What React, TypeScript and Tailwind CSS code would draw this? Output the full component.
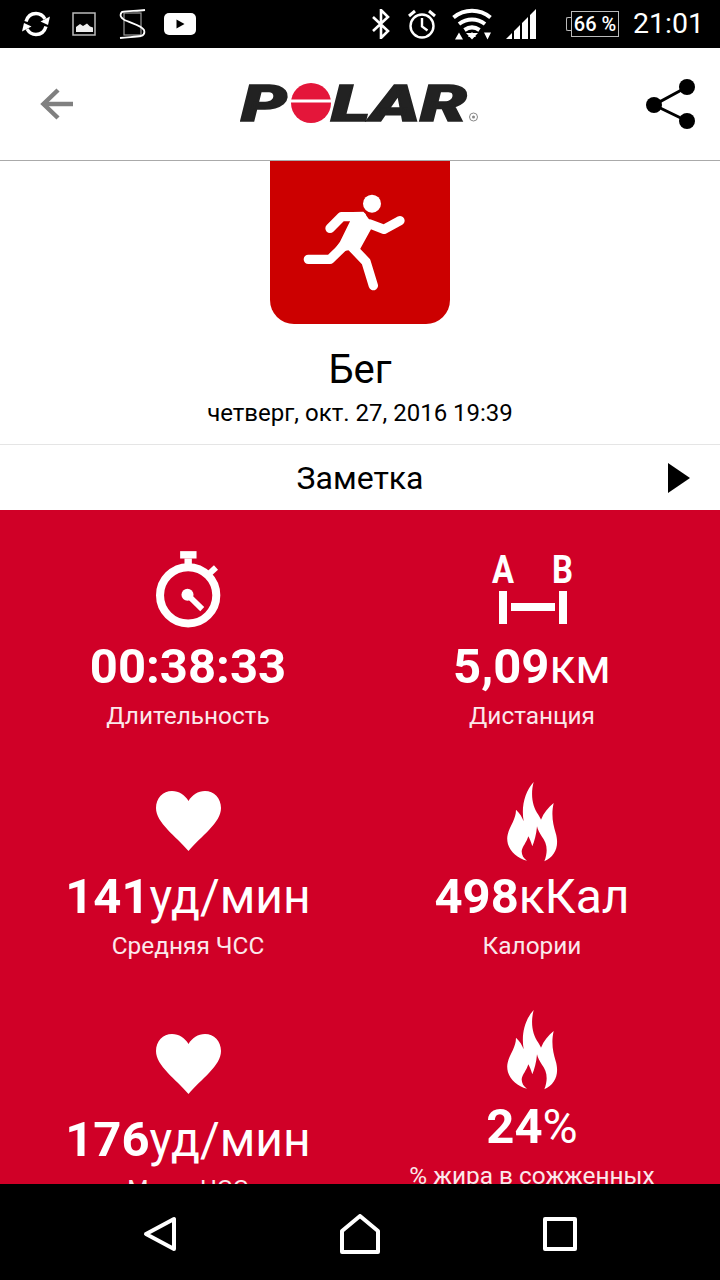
const FONT = "font-['Roboto',sans-serif]";

function SyncIcon() {
  return (
    <svg width="30" height="28" viewBox="0 0 30 28" fill="none" stroke="#fff" strokeWidth="3.4">
      <path d="M5 11.5C6.5 6.5 10 3.5 15 3.5c4 0 7 2 9 5.5" />
      <path d="M25 16.5C23.5 21.5 20 24.5 15 24.5c-4 0-7-2-9-5.5" />
      <path d="M29 6.5l-2 8.5-7.5-3.5z" fill="#fff" stroke="none" />
      <path d="M1 21.500l2-8.500 7.500 3.500z" fill="#fff" stroke="none" />
    </svg>
  );
}

function ImageIcon() {
  return (
    <svg width="24" height="24" viewBox="0 0 24 24" className="ml-[21px]">
      <rect x="1" y="1" width="22" height="22" fill="none" stroke="#bbb" strokeWidth="1.5" />
      <path d="M4 20v-5l4-3 3 2 4-2.500 3 3 3 1v4.500z" fill="#eee" />
    </svg>
  );
}

function ScrollIcon() {
  return (
    <svg width="27" height="30" viewBox="0 0 27 30" fill="none" className="ml-[23px]">
      <rect x="5" y="4" width="17" height="22" stroke="#999" strokeWidth="1.200" />
      <path d="M26 1C18 2 9 2 3 3 0 6 2 10 8 12c7 3 15 5 17 9 1 3 0 5-3 6-6 1-13 1-21 2" stroke="#fff" strokeWidth="1.800" />
    </svg>
  );
}

function YoutubeIcon() {
  return (
    <svg width="32" height="22" viewBox="0 0 32 22" className="ml-[18px]">
      <rect width="32" height="22" rx="5" fill="#fff" />
      <path d="M12.500 6.500l8 4.500-8 4.500z" fill="#000" />
    </svg>
  );
}

function BluetoothIcon() {
  return (
    <svg width="18" height="30" viewBox="0 0 18 30" fill="none" stroke="#fff" strokeWidth="2.600" className="ml-auto">
      <path d="M1 8l15 14-7 7V1l7 7L1 22" />
    </svg>
  );
}

function AlarmIcon() {
  return (
    <svg width="30" height="30" viewBox="0 0 30 30" fill="none" stroke="#fff" strokeWidth="2.400" className="ml-[17px]">
      <circle cx="15" cy="17" r="11.500" />
      <path d="M15 9v8.500l5.500 4" />
      <path d="M2 7l6-5M28 7l-6-5" strokeWidth="3" />
    </svg>
  );
}

function WifiIcon() {
  return (
    <svg width="40" height="32" viewBox="0 0 40 32" fill="none" stroke="#fff" strokeWidth="4" className="ml-[15px]">
      <path d="M1.500 9.500c11-9 26-9 37 0" />
      <path d="M7 16c8-6 18-6 26 0" />
      <path d="M12.500 22c5-3.500 10-3.500 15 0" />
      <path d="M20 24l-4 5h8z" fill="#fff" stroke="none" />
      <path d="M3 31.500l4-7 4 7zM20 31.500l-6-6.500h12zM32 24.500h7l-3.500 7z" fill="#fff" stroke="none" />
    </svg>
  );
}

function SignalIcon() {
  return (
    <svg width="31" height="30" viewBox="0 0 31 30" fill="#fff" className="ml-[14px]">
      <path d="M0 30l6-6v6zM8 30v-8l6-6v14zM16 30V14l6-6v22zM24 30V6l6-6v30z" />
    </svg>
  );
}

function Battery() {
  return (
    <div className="ml-[29px] flex h-[26px] items-center">
      <div className="h-[14px] w-[5px] rounded-l-[2px] border-y border-l border-[#bbb]" />
      <div className="flex h-[26px] w-[48px] items-center justify-center border border-[#bbb] text-[20px] font-medium text-white">
        66 %
      </div>
    </div>
  );
}

function StatusBar() {
  return (
    <div className={`flex h-[48px] shrink-0 items-center bg-black pl-[21px] pr-[16px] ${FONT}`}>
      <SyncIcon />
      <ImageIcon />
      <ScrollIcon />
      <YoutubeIcon />
      <BluetoothIcon />
      <AlarmIcon />
      <WifiIcon />
      <SignalIcon />
      <Battery />
      <span className="ml-[14px] text-[28.500px] leading-none text-white">21:01</span>
    </div>
  );
}

function PolarLogo() {
  return (
    <svg width="240" height="64" viewBox="0 -12 240 64" className="block">
      <text x="1" y="37" fontFamily="Roboto" fontWeight="900" fontStyle="italic" fontSize="50" fill="#222" stroke="#222" strokeWidth="1.500" textLength="46" lengthAdjust="spacingAndGlyphs">
        P
      </text>
      <circle cx="71" cy="19" r="20" fill="#e4163a" />
      <rect x="50" y="15.500" width="42" height="3" fill="#fff" />
      <text x="91" y="37" fontFamily="Roboto" fontWeight="900" fontStyle="italic" fontSize="50" fill="#222" stroke="#222" strokeWidth="1.500" textLength="136" lengthAdjust="spacingAndGlyphs">
        LAR
      </text>
      <circle cx="233.500" cy="33" r="4" fill="none" stroke="#888" strokeWidth="1" />
      <circle cx="233.500" cy="33" r="1.500" fill="#888" />
    </svg>
  );
}

function Header() {
  return (
    <div className="grid h-[113px] shrink-0 grid-cols-[1fr_auto_1fr] items-center border-b border-[#aaa] bg-white px-[24px]">
      <svg width="33" height="32" viewBox="0 0 33 32" fill="none" stroke="#808080" strokeWidth="4.500" className="ml-[16px]">
        <path d="M33 16H3" />
        <path d="M18 2L3.500 16 18 30" />
      </svg>
      <PolarLogo />
      <svg width="50" height="50" viewBox="0 0 50 50" className="justify-self-end">
        <path d="M41 8L8 26l33 16" fill="none" stroke="#000" strokeWidth="3" />
        <circle cx="41" cy="8" r="8" />
        <circle cx="8" cy="26" r="8" />
        <circle cx="41" cy="42" r="8" />
      </svg>
    </div>
  );
}

function RunnerBadge() {
  return (
    <div className="h-[163px] w-[180px] overflow-hidden rounded-b-[24px] bg-[#cc0000]">
      <svg width="180" height="163" viewBox="30 3 540 489" className="block" fill="none" stroke="#fff" strokeWidth="28" strokeLinecap="round" strokeLinejoin="round">
        <circle cx="336" cy="131" r="27" fill="#fff" stroke="none" />
        <path d="M210 205l35-35h60" />
        <path d="M330 192l42 16 48-26" />
        <path d="M145 298h65l52-50" />
        <path d="M270 255l48 50 22 72" />
        <path d="M245 157L310 155 340 195 300 268 270 270 240 275 222 270 240 245 272 180z" fill="#fff" stroke="none" />
      </svg>
    </div>
  );
}

function Stopwatch() {
  return (
    <svg width="67" height="79" viewBox="225 30 200 235" fill="none" stroke="#fff">
      <circle cx="324" cy="165" r="84" strokeWidth="24" />
      <rect x="300" y="33" width="49" height="22" fill="#fff" stroke="none" />
      <rect x="313" y="55" width="22" height="28" fill="#fff" stroke="none" />
      <path d="M385 102l22-20" strokeWidth="18" />
      <circle cx="322" cy="163" r="18" fill="#fff" stroke="none" />
      <path d="M322 163l44 43" strokeWidth="17" />
    </svg>
  );
}

function AbIcon() {
  return (
    <svg width="88" height="90" viewBox="488 544 88 90" fill="#fff" className="shrink-0">
      <text x="492" y="583" fontFamily="Roboto" fontWeight="700" fontSize="39" textLength="22" lengthAdjust="spacingAndGlyphs">
        A
      </text>
      <text x="552" y="583" fontFamily="Roboto" fontWeight="700" fontSize="39" textLength="21" lengthAdjust="spacingAndGlyphs">
        B
      </text>
      <rect x="499" y="591" width="8" height="33" />
      <rect x="511" y="603" width="44" height="8" />
      <rect x="559" y="591" width="8" height="33" />
    </svg>
  );
}

function Heart() {
  return (
    <svg width="65" height="60" viewBox="0 0 65 60" fill="#fff" className="mt-[4px]">
      <path d="M32.500 60C20 45 0 32 0 17 0 7 7 0 16 0c7 0 13 4 16.500 10C36 4 42 0 49 0c9 0 16 7 16 17 0 15-20 28-32.500 43z" />
    </svg>
  );
}

function Flame({ className }: { className?: string }) {
  return (
    <svg width="51" height="81" viewBox="228 30 153 241" fill="#fff" className={className}>
      <path d="M308 32C298 70 304 105 322 130 326 136 328 140 330 145 338 125 352 108 368 95 360 130 366 160 374 185 386 225 372 255 340 270 352 240 348 215 332 195 326 185 320 175 318 165 316 190 310 210 304 225 300 212 296 202 292 195 286 215 274 225 272 240 272 252 278 262 288 268 250 260 222 225 230 190 235 165 255 145 255 115 266 125 274 138 278 150 270 105 282 60 308 32Z" />
    </svg>
  );
}

function Stat({ icon, value, unit, label }: { icon: React.ReactNode; value: string; unit?: string; label: string }) {
  return (
    <div className="flex flex-col items-center text-center text-white">
      <div className="flex h-[88px] items-center justify-center">{icon}</div>
      <div className="mt-[6px] text-[49px] font-bold leading-[56px]">
        {value}
        {unit && <span className="text-[48px] font-normal">{unit}</span>}
      </div>
      <div className="mt-[8px] px-[20px] text-[24.400px] leading-[26px] text-[#fbe8eb]">{label}</div>
    </div>
  );
}

function StatsGrid() {
  return (
    <div className={`min-h-0 flex-1 overflow-hidden bg-[#d00027] px-[16px] pt-[35px] ${FONT}`}>
      <div className="grid grid-cols-2 items-center gap-y-[46px]">
        <Stat icon={<Stopwatch />} value="00:38:33" label="Длительность" />
        <Stat icon={<AbIcon />} value="5,09" unit="км" label="Дистанция" />
        <Stat icon={<Heart />} value="141" unit="уд/мин" label="Средняя ЧСС" />
        <Stat icon={<Flame className="mt-[4px]" />} value="498" unit="кКал" label="Калории" />
        <Stat icon={<Heart />} value="176" unit="уд/мин" label="Макс. ЧСС" />
        <Stat icon={<Flame />} value="24" unit="%" label="% жира в сожженных калориях" />
      </div>
    </div>
  );
}

function NavBar() {
  return (
    <div className="grid h-[96px] shrink-0 grid-cols-3 items-center justify-items-center bg-black px-[60px] pt-[3px]">
      <svg width="34" height="36" viewBox="0 0 34 36" fill="none" stroke="#fff" strokeWidth="4" strokeLinejoin="round">
        <path d="M31 3v30L3 18z" />
      </svg>
      <svg width="40" height="40" viewBox="0 0 40 40" fill="none" stroke="#fff" strokeWidth="4" strokeLinejoin="round">
        <path d="M2 17L20 2l18 15v21H2z" />
      </svg>
      <svg width="34" height="34" viewBox="0 0 34 34" fill="none" stroke="#fff" strokeWidth="4" strokeLinejoin="round">
        <rect x="2" y="2" width="30" height="30" />
      </svg>
    </div>
  );
}

export default function App() {
  return (
    <div className={`flex h-[1280px] w-[720px] flex-col overflow-hidden bg-white ${FONT}`}>
      <StatusBar />
      <Header />
      <div className="flex shrink-0 flex-col items-center text-black">
        <RunnerBadge />
        <h1 className="mt-[24px] text-[40px] leading-[44px]">Бег</h1>
        <p className="mt-[7px] text-[24px] leading-[28px]">четверг, окт. 27, 2016 19:39</p>
      </div>
      <div className="mt-[17px] flex h-[66px] shrink-0 items-center border-t border-[#e5e5e5] bg-white text-black">
        <div className="w-[60px]" />
        <div className="flex-1 text-center text-[32px]">Заметка</div>
        <div className="flex w-[60px] items-center pl-[8px]">
          <svg width="22" height="30" viewBox="0 0 22 30">
            <path d="M0 0l22 15L0 30z" />
          </svg>
        </div>
      </div>
      <StatsGrid />
      <NavBar />
    </div>
  );
}
